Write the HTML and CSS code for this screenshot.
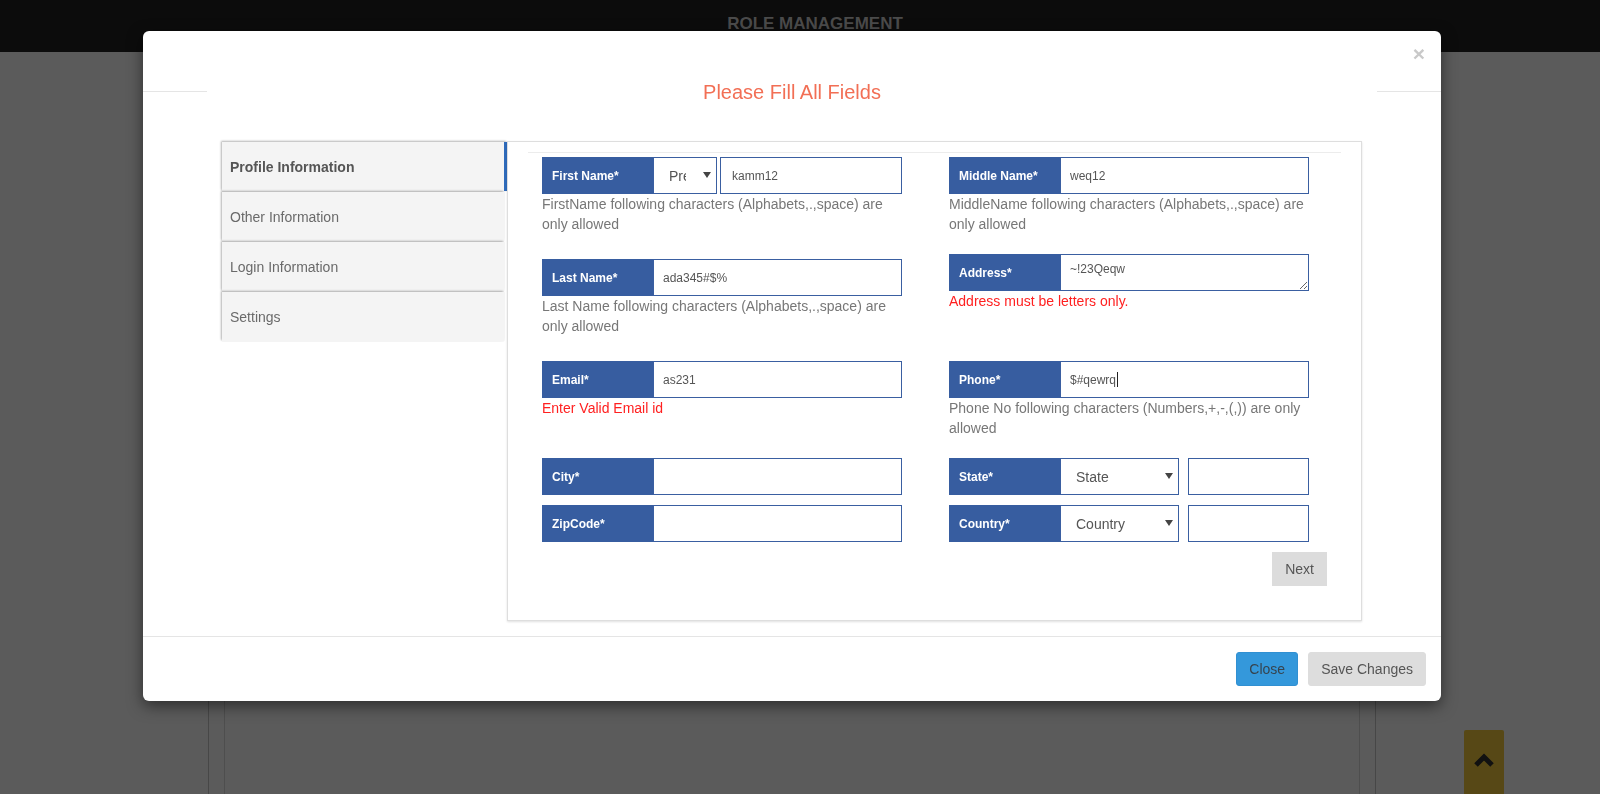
FILE: index.html
```html
<!DOCTYPE html>
<html lang="en">
<head>
<meta charset="utf-8">
<title>Role Management</title>
<link rel="stylesheet" href="styles.css">
</head>
<body>
<header class="topbar"><h1 class="brand">ROLE MANAGEMENT</h1></header>
<main class="page"><div class="page-inner"></div></main>

<div class="modal">
  <div class="modal-header"><button class="close" type="button">×</button></div>
  <h4 class="modal-title">Please Fill All Fields</h4>
  <div class="modal-body">
    <ul class="tabs">
      <li class="tab active">Profile Information</li>
      <li class="tab">Other Information</li>
      <li class="tab">Login Information</li>
      <li class="tab">Settings</li>
    </ul>
    <div class="panel">
      <hr class="rule">
      <div class="form">
        <div class="row">
          <div class="cell">
            <div class="group">
              <span class="label">First Name*</span>
              <div class="select sel-prefix"><span class="sel-text clip">Pre</span><span class="caret"></span></div>
              <div class="field gap3">kamm12</div>
            </div>
            <p class="hint">FirstName following characters (Alphabets,.,space) are only allowed</p>
          </div>
          <div class="cell">
            <div class="group">
              <span class="label">Middle Name*</span>
              <div class="field">weq12</div>
            </div>
            <p class="hint">MiddleName following characters (Alphabets,.,space) are only allowed</p>
          </div>
        </div>
        <div class="row row-tall">
          <div class="cell shift">
            <div class="group">
              <span class="label">Last Name*</span>
              <div class="field">ada345#$%</div>
            </div>
            <p class="hint">Last Name following characters (Alphabets,.,space) are only allowed</p>
          </div>
          <div class="cell">
            <div class="group">
              <span class="label">Address*</span>
              <textarea class="area">~!23Qeqw</textarea>
            </div>
            <p class="error">Address must be letters only.</p>
          </div>
        </div>
        <div class="row">
          <div class="cell">
            <div class="group">
              <span class="label">Email*</span>
              <div class="field">as231</div>
            </div>
            <p class="error">Enter Valid Email id</p>
          </div>
          <div class="cell">
            <div class="group">
              <span class="label">Phone*</span>
              <div class="field">$#qewrq<span class="cursor"></span></div>
            </div>
            <p class="hint">Phone No following characters (Numbers,+,-,(,)) are only allowed</p>
          </div>
        </div>
        <div class="row row-tight">
          <div class="cell">
            <div class="group">
              <span class="label">City*</span>
              <div class="field"></div>
            </div>
          </div>
          <div class="cell">
            <div class="group">
              <span class="label">State*</span>
              <div class="select sel-wide"><span class="sel-text">State</span><span class="caret"></span></div>
              <div class="field gap9"></div>
            </div>
          </div>
        </div>
        <div class="row row-tight">
          <div class="cell">
            <div class="group">
              <span class="label">ZipCode*</span>
              <div class="field"></div>
            </div>
          </div>
          <div class="cell">
            <div class="group">
              <span class="label">Country*</span>
              <div class="select sel-wide"><span class="sel-text">Country</span><span class="caret"></span></div>
              <div class="field gap9"></div>
            </div>
          </div>
        </div>
      </div>
      <div class="actions"><button class="btn-next" type="button">Next</button></div>
    </div>
  </div>
  <div class="modal-footer">
    <button class="btn btn-close" type="button">Close</button>
    <button class="btn btn-save" type="button">Save Changes</button>
  </div>
</div>

<a class="to-top" href="#">
  <svg width="22" height="16" viewBox="0 0 22 16"><polyline points="3,14 11,6 19,14" fill="none" stroke="#111" stroke-width="5"/></svg>
</a>
</body>
</html>
```

FILE: styles.css
```css
* { box-sizing: border-box; }
html, body { margin: 0; padding: 0; }
body {
  background: #5b5b5b;
  font-family: "Liberation Sans", Arial, sans-serif;
  height: 794px;
  overflow: hidden;
}
.topbar {
  height: 52px;
  background: #0c0c0c;
}
.brand {
  margin: 0;
  padding-left: 30px;
  text-align: center;
  font-size: 17px;
  line-height: 48px;
  font-weight: bold;
  color: #4b4b4b;
}
.page {
  margin: 8px 0 0 208px;
  width: 1168px;
  height: 740px;
  border-left: 1px solid #474747;
  border-right: 1px solid #474747;
  padding: 0 15px;
}
.page-inner {
  height: 100%;
  border-left: 1px solid #4e4e4e;
  border-right: 1px solid #4e4e4e;
}

/* modal */
.modal {
  position: fixed;
  top: 31px;
  left: 143px;
  width: 1298px;
  background: #fff;
  border-radius: 6px;
  box-shadow: 0 5px 15px rgba(0,0,0,0.5);
}
.modal-header {
  height: 61px;
  border-bottom: 1px solid #e5e5e5;
  display: flex;
  justify-content: flex-end;
  align-items: flex-start;
  padding: 14px 16px 0 0;
}
.close {
  border: 0;
  background: none;
  padding: 0;
  font-family: "Liberation Sans", Arial, sans-serif;
  font-size: 21px;
  font-weight: bold;
  line-height: 18px;
  color: #c9c9c9;
}
.modal-title {
  margin: -12px 64px 0;
  background: #fff;
  height: 24px;
  line-height: 24px;
  text-align: center;
  font-size: 20px;
  font-weight: normal;
  color: #f26f55;
}
.modal-body {
  display: flex;
  padding: 37px 79px 15px;
}
.tabs {
  list-style: none;
  margin: 1px 0 0;
  padding: 0;
  width: 285px;
  flex: none;
}
.tab {
  width: 282px;
  height: 49px;
  margin-bottom: 1px;
  padding-left: 8px;
  background: #f4f4f4;
  box-shadow: -1px -1px 2px rgba(0,0,0,0.28), 0 0 1px rgba(0,0,0,0.15);
  font-size: 14px;
  line-height: 50px;
  color: #6a6a6a;
}
.tab.active {
  width: 285px;
  border-right: 3px solid #2f6bbb;
  font-weight: bold;
  color: #555;
}
.panel {
  width: 855px;
  border: 1px solid #dedede;
  box-shadow: 0 1px 2px rgba(0,0,0,0.12);
  padding: 10px 20px 34px;
}
.rule {
  margin: 0 0 4px;
  border: 0;
  border-top: 1px solid #ececec;
}
.form { padding-left: 14px; }
.row {
  display: grid;
  grid-template-columns: 360px 360px;
  column-gap: 47px;
  align-items: start;
  margin-bottom: 20px;
}
.row-tall { margin-bottom: 25px; }
.row-tight { margin-bottom: 10px; }
.shift { margin-top: 5px; }
.group {
  display: flex;
  height: 37px;
}
.label {
  flex: none;
  width: 111px;
  background: #375da0;
  color: #fff;
  font-size: 12px;
  font-weight: bold;
  padding-left: 10px;
  display: flex;
  align-items: center;
}
.field {
  flex: 1;
  min-width: 0;
  border: 1px solid #3a5fa1;
  background: #fff;
  padding: 0 9px;
  font-size: 12px;
  color: #555;
  display: flex;
  align-items: center;
}
.gap3 { margin-left: 3px; padding-left: 11px; }
.gap9 { margin-left: 9px; }
.cursor {
  display: inline-block;
  width: 1px;
  height: 15px;
  background: #222;
  margin-left: 1px;
}
.area {
  flex: 1;
  height: 37px;
  margin: 0;
  border: 1px solid #3a5fa1;
  border-radius: 0;
  padding: 7px 9px;
  font-family: "Liberation Sans", Arial, sans-serif;
  font-size: 12px;
  color: #555;
  outline: none;
}
.select {
  flex: none;
  border: 1px solid #3a5fa1;
  background: #fff;
  padding: 0 5px 0 15px;
  display: flex;
  align-items: center;
  justify-content: space-between;
  font-size: 14px;
  color: #555;
}
.sel-prefix { width: 64px; }
.sel-wide { width: 119px; }
.sel-text { white-space: nowrap; }
.clip { width: 17px; overflow: hidden; }
.caret {
  width: 0;
  height: 0;
  border-left: 4px solid transparent;
  border-right: 4px solid transparent;
  border-top: 6px solid #444;
  margin-top: -2px;
}
.hint, .error {
  margin: 0 -4px 0 0;
  font-size: 14px;
  line-height: 20px;
  color: #777;
}
.error { color: #ff2020; }
.actions {
  display: flex;
  justify-content: flex-end;
  padding-right: 14px;
}
.btn-next {
  height: 34px;
  padding: 0 13px;
  border: 0;
  background: #dcdcdc;
  font-family: "Liberation Sans", Arial, sans-serif;
  font-size: 14px;
  color: #555;
}
.modal-footer {
  border-top: 1px solid #e5e5e5;
  padding: 15px;
  display: flex;
  justify-content: flex-end;
  gap: 10px;
}
.btn {
  height: 34px;
  padding: 0 12px;
  border-radius: 3px;
  font-family: "Liberation Sans", Arial, sans-serif;
  font-size: 14px;
}
.btn-close {
  background: #3498db;
  border: 1px solid #3190d2;
  color: #36444f;
}
.btn-save {
  background: #dddddd;
  border: 1px solid #dddddd;
  color: #555;
}
.to-top {
  position: fixed;
  left: 1464px;
  top: 730px;
  width: 40px;
  height: 80px;
  background: #574816;
  border-radius: 2px;
  display: flex;
  justify-content: center;
  padding-top: 21px;
}
.to-top svg { display: block; }
```
